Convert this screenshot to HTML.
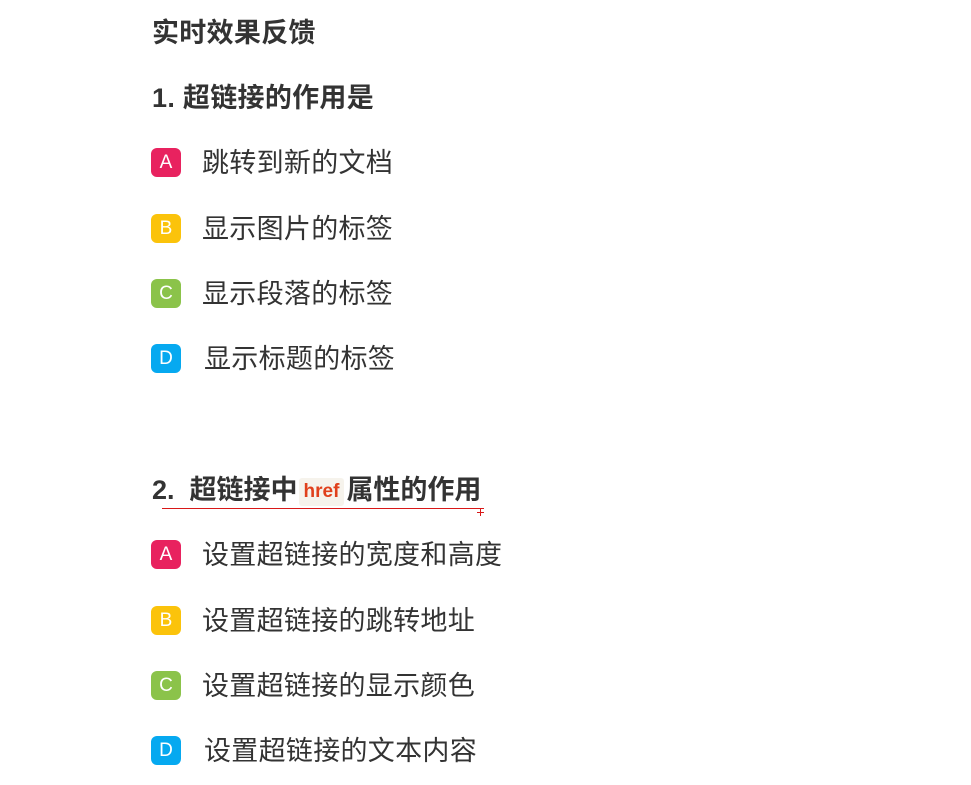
<!DOCTYPE html>
<html><head><meta charset="utf-8"><style>
body{margin:0;width:971px;height:785px;background:#fff;position:relative;overflow:hidden;font-family:"Liberation Sans","Noto Sans CJK SC",sans-serif;color:#333}
.t{position:absolute;left:152px;font-weight:bold;font-size:27px;letter-spacing:0.3px;line-height:30px;white-space:nowrap;color:#333}
.o{position:absolute;left:151px;height:30px;white-space:nowrap}
.b{position:absolute;left:0;top:0;width:30px;height:29px;border-radius:6px;color:#fff;font-size:19px;line-height:29px;text-align:center}
.s{position:absolute;left:51px;top:-1px;font-size:27px;letter-spacing:0.3px;line-height:32px;color:#333}
.A{background:#e8225f}.B{background:#fbc30b}.C{background:#8bc34a}.D{background:#06a9f0}
.code{display:inline-block;background:#f6f3ec;color:#e0401c;font-size:19px;letter-spacing:0;padding:0 5px;line-height:28px;border-radius:3px;vertical-align:2px;margin:0 2px 0 1px}
</style></head><body>
<div class="t" style="top:18px">实时效果反馈</div>
<div class="t" style="top:83px">1. 超链接的作用是</div>
<div class="o" style="top:148px"><div class="b A">A</div><div class="s">跳转到新的文档</div></div>
<div class="o" style="top:214px"><div class="b B">B</div><div class="s">显示图片的标签</div></div>
<div class="o" style="top:279px"><div class="b C">C</div><div class="s">显示段落的标签</div></div>
<div class="o" style="top:344px"><div class="b D">D</div><div class="s" style="left:53px">显示标题的标签</div></div>
<div class="t" style="top:475px;letter-spacing:0">2.&nbsp; 超链接中<span class="code">href</span>属性的作用</div>
<div style="position:absolute;left:162px;top:508px;width:322px;height:1px;background:#d81818"></div>
<div style="position:absolute;left:477px;top:512px;width:7px;height:1px;background:#d81818"></div>
<div style="position:absolute;left:480px;top:509px;width:1px;height:7px;background:#d81818"></div>
<div class="o" style="top:540px"><div class="b A">A</div><div class="s">设置超链接的宽度和高度</div></div>
<div class="o" style="top:606px"><div class="b B">B</div><div class="s">设置超链接的跳转地址</div></div>
<div class="o" style="top:671px"><div class="b C">C</div><div class="s">设置超链接的显示颜色</div></div>
<div class="o" style="top:736px"><div class="b D">D</div><div class="s" style="left:53px">设置超链接的文本内容</div></div>
</body></html>
